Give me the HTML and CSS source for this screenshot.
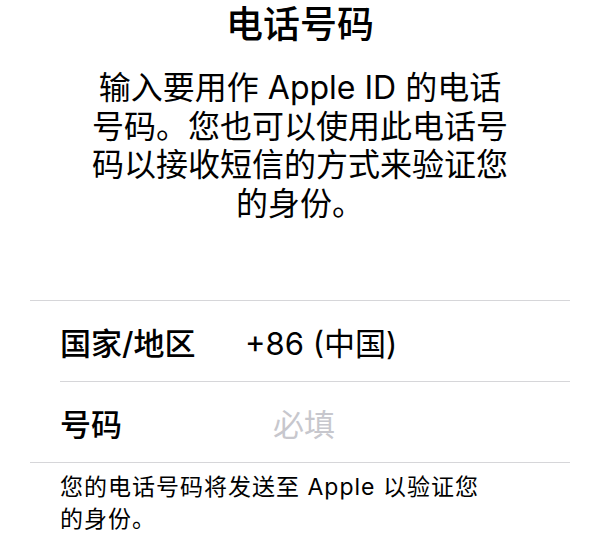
FILE: index.html
```html
<!DOCTYPE html>
<html lang="zh-CN">
<head>
<meta charset="utf-8">
<title>电话号码</title>
<link rel="stylesheet" href="styles.css">
</head>
<body>
<main class="page">
  <h1 class="title">电话号码</h1>
  <p class="desc">输入要用作 Apple ID 的电话号码。您也可以使用此电话号码以接收短信的方式来验证您的身份。</p>
  <section class="form">
    <div class="row">
      <span class="label">国家/地区</span>
      <span class="value">+86 (中国)</span>
    </div>
    <div class="row">
      <span class="label">号码</span>
      <span class="placeholder">必填</span>
    </div>
  </section>
  <p class="note">您的电话号码将发送至 Apple 以验证您的身份。</p>
</main>
</body>
</html>
```

FILE: styles.css
```css
html, body {
  margin: 0;
  padding: 0;
  background: #ffffff;
}

body {
  font-family: Inter, "Noto Sans CJK SC", sans-serif;
  color: #000000;
}

.page {
  display: flex;
  flex-direction: column;
}

.title {
  margin: 0;
  font-size: 37px;
  font-weight: 500;
  line-height: 50px;
  text-align: center;
}

.desc {
  margin: 19px auto 0;
  width: 418px;
  font-size: 32px;
  line-height: 38.5px;
  text-align: center;
}

.form {
  margin: 77px 30px 0;
  border-top: 1px solid #d6d6d9;
  border-bottom: 1px solid #d6d6d9;
}

.row {
  margin-left: 30px;
  height: 80px;
  display: flex;
  align-items: center;
  font-size: 31px;
}

.row + .row {
  border-top: 1px solid #d6d6d9;
}

.label {
  width: 185px;
  flex: none;
  font-weight: 500;
}

.value {
  color: #000000;
}

.placeholder {
  margin-left: 28px;
  color: #c7c7cd;
}

.note {
  margin: 8px 0 0 60px;
  width: 440px;
  font-size: 23px;
  letter-spacing: 1px;
  line-height: 32px;
}
```
